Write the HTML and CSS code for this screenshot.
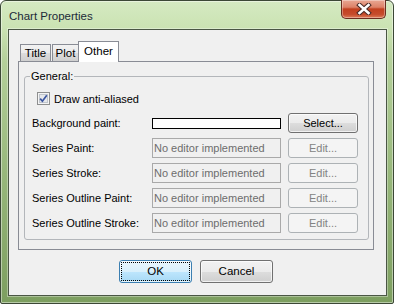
FILE: index.html
```html
<!DOCTYPE html>
<html>
<head>
<meta charset="utf-8">
<link rel="stylesheet" href="styles.css">
</head>
<body>
<div class="window">
  <div class="titlebar">
    <span class="title">Chart Properties</span>
    <div class="close">
      <svg width="16" height="12" viewBox="0 0 16 12">
        <path d="M3.5 2 L12.5 10 M12.5 2 L3.5 10" stroke="#4a2a26" stroke-width="4.6" stroke-linecap="square" fill="none"/>
        <path d="M3.5 2 L12.5 10 M12.5 2 L3.5 10" stroke="#ffffff" stroke-width="2.6" stroke-linecap="square" fill="none"/>
      </svg>
    </div>
  </div>
  <div class="client">
    <div class="tabs">
      <div class="tab t-title">Title</div>
      <div class="tab t-plot">Plot</div>
      <div class="tab t-other active">Other</div>
    </div>
    <div class="panel">
      <fieldset class="group">
        <legend>General:</legend>
        <div class="check">
          <svg class="box" width="13" height="13" viewBox="0 0 13 13">
            <rect x="0.5" y="0.5" width="12" height="12" fill="#f4f4f4" stroke="#8e8f8f"/>
            <rect x="2.5" y="2.5" width="8" height="8" fill="#e6e8eb" stroke="#c0c5cc"/>
            <path d="M3.2 6.6 L5.4 9.2 L9.8 3.2" stroke="#3a55a0" stroke-width="1.7" fill="none"/>
          </svg>
          <span>Draw anti-aliased</span>
        </div>
        <div class="grid">
          <span class="lbl">Background paint:</span>
          <span class="swatch"></span>
          <span class="btn">Select...</span>

          <span class="lbl">Series Paint:</span>
          <span class="field">No editor implemented</span>
          <span class="btn disabled">Edit...</span>

          <span class="lbl">Series Stroke:</span>
          <span class="field">No editor implemented</span>
          <span class="btn disabled">Edit...</span>

          <span class="lbl">Series Outline Paint:</span>
          <span class="field">No editor implemented</span>
          <span class="btn disabled">Edit...</span>

          <span class="lbl">Series Outline Stroke:</span>
          <span class="field">No editor implemented</span>
          <span class="btn disabled">Edit...</span>
        </div>
      </fieldset>
    </div>
    <div class="actions">
      <span class="btn big ok">OK</span>
      <span class="btn big">Cancel</span>
    </div>
  </div>
</div>
</body>
</html>
```

FILE: styles.css
```css
html, body {
  margin: 0;
  padding: 0;
}
body {
  width: 394px;
  height: 304px;
  overflow: hidden;
  font-family: "Liberation Sans", Arial, sans-serif;
  font-size: 11px;
  color: #000;
}
.window {
  width: 394px;
  height: 304px;
  box-sizing: border-box;
  border: 1px solid #3c4836;
  border-radius: 6px 6px 2px 2px;
  background: linear-gradient(180deg, #d5eac2 0px, #cbe3b3 26px, #b4d09a 60px, #98b87c 170px, #7c9e5f 304px);
  box-shadow: inset 0 0 0 1px rgba(255,255,255,0.45);
  padding: 0 6px 7px 7px;
  display: flex;
  flex-direction: column;
}
.titlebar {
  height: 28px;
  display: flex;
  align-items: flex-start;
}
.title {
  margin-top: 8px;
  margin-left: 1px;
  font-size: 11.5px;
  line-height: 14px;
  color: #1c2a38;
}
.close {
  margin-left: auto;
  margin-top: -1px;
  margin-right: 1px;
  width: 45px;
  height: 19px;
  box-sizing: border-box;
  border: 1px solid #6a2d20;
  border-top: none;
  border-radius: 0 0 5px 5px;
  background: linear-gradient(180deg, #e9a793 0%, #dd8268 40%, #c2401f 50%, #c64c2c 80%, #de7c58 100%);
  box-shadow: inset 0 0 0 1px rgba(255,255,255,0.35);
  display: flex;
  align-items: center;
  justify-content: center;
}
.client {
  flex: 1;
  border: 1px solid #4a5644;
  box-shadow: 0 0 0 1px rgba(255,255,255,0.35);
  background: #f0f0f0;
  padding: 11px 12px 0 9px;
  display: flex;
  flex-direction: column;
}
.tabs {
  height: 20px;
  display: flex;
  align-items: flex-end;
}
.tab {
  box-sizing: border-box;
  height: 17px;
  border: 1px solid #898c95;
  border-bottom: none;
  background: linear-gradient(180deg, #f2f2f2 0%, #ebebeb 50%, #dddddd 51%, #cfcfcf 100%);
  text-align: center;
  line-height: 16px;
  margin-left: 2px;
  font-size: 11.5px;
}
.t-title { width: 31px; }
.t-plot { width: 27px; margin-left: 1px; }
.t-other { width: 41px; margin-left: -1px; }
.tab.active {
  height: 21px;
  margin-bottom: -1px;
  background: #ffffff;
  line-height: 18px;
  position: relative;
  z-index: 1;
}
.panel {
  box-sizing: border-box;
  height: 189px;
  border: 1px solid #898c95;
  background: #f0f0f0;
  padding: 8px 4px 9px 5px;
  display: flex;
  flex-direction: column;
}
.group {
  margin: 0;
  flex: 1;
  border: 1px solid #b3b6ba;
  border-radius: 3px;
  padding: 9px 9px 5px 5px;
  min-width: 0;
}
.group legend {
  padding: 0 1px;
  line-height: 13px;
}
.check {
  display: flex;
  align-items: center;
  gap: 4px;
  height: 13px;
  margin-left: 7px;
}
.box { display: block; }
.grid {
  margin-top: 8px;
  margin-left: 2px;
  display: grid;
  grid-template-columns: 120px 136px 70px;
  grid-auto-rows: 20px;
  row-gap: 5px;
}
.lbl {
  align-self: center;
  white-space: nowrap;
}
.swatch {
  width: 129px;
  align-self: center;
  height: 11px;
  box-sizing: border-box;
  border: 1px solid #000;
  background: #fff;
}
.field {
  width: 129px;
  box-sizing: border-box;
  border: 1px solid #a9a9a9;
  background: #f0f0f0;
  color: #6d6d6d;
  padding-left: 1px;
  line-height: 18px;
  white-space: nowrap;
  overflow: hidden;
}
.btn {
  box-sizing: border-box;
  border: 1px solid #707070;
  border-radius: 3px;
  background: linear-gradient(180deg, #f2f2f2 0%, #ebebeb 50%, #dddddd 51%, #cfcfcf 100%);
  box-shadow: inset 0 0 0 1px rgba(255,255,255,0.7);
  text-align: center;
  line-height: 18px;
}
.btn.disabled {
  border-color: #adb2b5;
  background: #f4f4f4;
  box-shadow: none;
  color: #838383;
}
.actions {
  margin-top: 10px;
  display: flex;
  justify-content: center;
  gap: 8px;
}
.btn.big {
  width: 73px;
  height: 23px;
  line-height: 21px;
  font-size: 11.5px;
}
.btn.ok {
  border-color: #3c7fb1;
  background: linear-gradient(180deg, #eaf6fd 0%, #d9f0fc 50%, #bee6fd 51%, #a7d9f5 100%);
  outline: 1px dotted #000;
  outline-offset: -3px;
}
```
